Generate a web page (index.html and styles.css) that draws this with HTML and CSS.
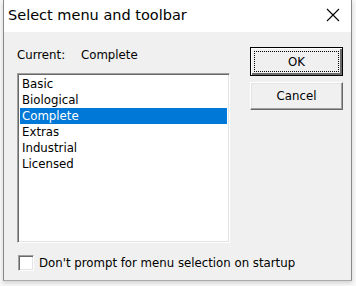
FILE: index.html
```html
<!DOCTYPE html>
<html lang="en">
<head>
    <meta charset="UTF-8">
    <title>Select menu and toolbar</title>
    <link rel="stylesheet" href="styles.css">
</head>
<body>
    <div class="dialog">
        <div class="titlebar">
            <span class="title">Select menu and toolbar</span>
            <span class="close">
                <svg width="14" height="14" viewBox="0 0 14 14"><path d="M1 1 L13 13 M13 1 L1 13" stroke="#000" stroke-width="1.1" fill="none"/></svg>
            </span>
        </div>
        <div class="content">
            <div class="main">
                <div class="left">
                    <div class="current"><span class="current-label">Current:</span><span>Complete</span></div>
                    <div class="listbox">
                        <div class="item">Basic</div>
                        <div class="item">Biological</div>
                        <div class="item selected">Complete</div>
                        <div class="item">Extras</div>
                        <div class="item">Industrial</div>
                        <div class="item">Licensed</div>
                    </div>
                </div>
                <div class="buttons">
                    <div class="btn default"><span class="focus">OK</span></div>
                    <div class="btn">Cancel</div>
                </div>
            </div>
            <div class="check-row">
                <span class="checkbox"></span>
                <span>Don't prompt for menu selection on startup</span>
            </div>
        </div>
    </div>
</body>
</html>
```

FILE: styles.css
```css
body {
    margin: 0;
    width: 356px;
    height: 286px;
    overflow: hidden;
    background: #f7f7f7;
    font-family: "DejaVu Sans", Tahoma, sans-serif;
    font-size: 11.75px;
    color: #000;
}
.dialog {
    margin-left: 3px;
    width: 349px;
    height: 281px;
    box-sizing: border-box;
    border-left: 1px solid #888;
    border-right: 1px solid #888;
    border-bottom: 1px solid #aaa;
    background: #f0f0f0;
    box-shadow: 0 2px 4px rgba(0, 0, 0, 0.15);
}
.titlebar {
    height: 32px;
    background: #fff;
    display: flex;
    align-items: center;
    justify-content: space-between;
    padding: 0 11px 0 4px;
}
.title {
    font-size: 14.5px;
    margin-top: -2px;
}
.close {
    display: flex;
    margin-top: -2px;
}
.content {
    padding: 15px 8px 0 13px;
}
.main {
    display: flex;
    justify-content: space-between;
}
.current {
    height: 26px;
    line-height: 16px;
}
.current-label {
    display: inline-block;
    width: 64px;
}
.listbox {
    width: 213px;
    height: 170px;
    box-sizing: border-box;
    background: #fff;
    border-top: 1px solid #a0a0a0;
    border-left: 1px solid #a0a0a0;
    border-right: 1px solid #fff;
    border-bottom: 1px solid #fff;
    box-shadow: inset 1px 1px 0 #696969, inset -1px -1px 0 #e3e3e3;
    padding: 2px 2px 0 2px;
}
.item {
    height: 16px;
    line-height: 16px;
    padding-left: 2px;
}
.item.selected {
    background: #0078d7;
    color: #fff;
}
.buttons {
    display: flex;
    flex-direction: column;
    gap: 6px;
}
.btn {
    width: 93px;
    height: 28px;
    box-sizing: border-box;
    display: flex;
    align-items: center;
    justify-content: center;
    background: #f0f0f0;
    border-top: 1px solid #fff;
    border-left: 1px solid #fff;
    border-right: 1px solid #696969;
    border-bottom: 1px solid #696969;
    box-shadow: inset -1px -1px 0 #a0a0a0, inset 1px 1px 0 #e3e3e3;
}
.btn.default {
    height: 29px;
    border: 1px solid #000;
    box-shadow: inset 1px 1px 0 #fff, inset -2px -2px 0 #696969;
    padding: 3px;
}
.focus {
    flex: 1;
    align-self: stretch;
    display: flex;
    align-items: center;
    justify-content: center;
    border: 1px dotted #000;
}
.check-row {
    display: flex;
    align-items: center;
    margin-top: 12px;
    gap: 5px;
}
.checkbox {
    width: 16px;
    height: 16px;
    box-sizing: border-box;
    background: #fff;
    border-top: 1px solid #a0a0a0;
    border-left: 1px solid #a0a0a0;
    border-right: 1px solid #fff;
    border-bottom: 1px solid #fff;
    box-shadow: inset 1px 1px 0 #696969, inset -1px -1px 0 #e3e3e3;
    margin-left: 1px;
}
```
